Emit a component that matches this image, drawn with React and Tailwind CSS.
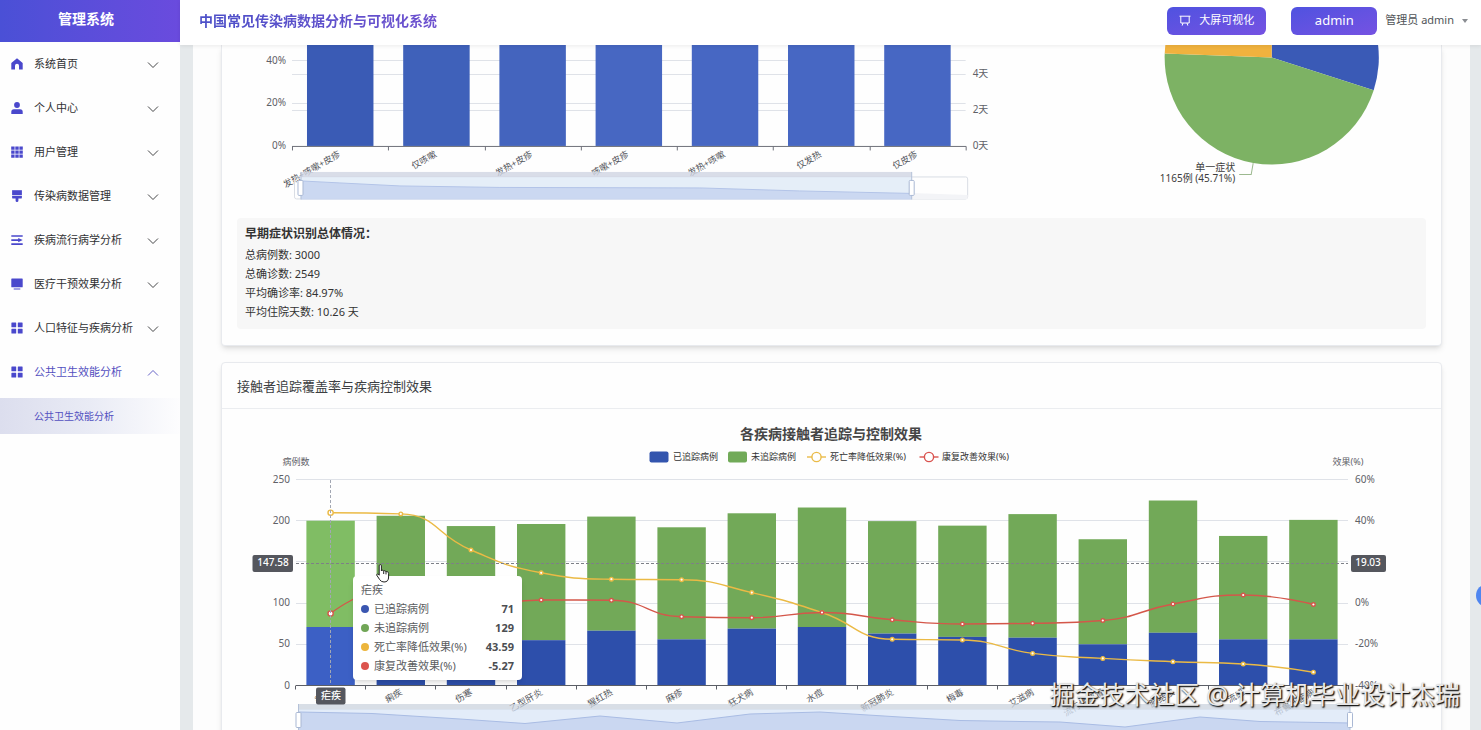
import React from "react";

const SANS = "font-['Noto_Sans','Noto_Sans_CJK_SC',sans-serif]";

const icons = {
  home: <path d="M6 0.3 L11.7 5 V11.6 H8 V7.8 A2 2 0 0 0 4 7.8 V11.6 H0.3 V5 Z" />,
  user: (
    <>
      <circle cx="6" cy="3" r="2.9" />
      <path d="M0.3 12 V9.8 A2.6 2.6 0 0 1 2.9 7.2 H9.1 A2.6 2.6 0 0 1 11.7 9.8 V12 Z" />
    </>
  ),
  grid: (
    <path d="M0.2 0.4h3.4v3.4H0.2zM4.3 0.4h3.4v3.4H4.3zM8.4 0.4h3.4v3.4H8.4zM0.2 4.4h3.4v3.4H0.2zM4.3 4.4h3.4v3.4H4.3zM8.4 4.4h3.4v3.4H8.4zM0.2 8.4h3.4v3.4H0.2zM4.3 8.4h3.4v3.4H4.3zM8.4 8.4h3.4v3.4H8.4z" />
  ),
  brush: (
    <>
      <path d="M1.1 0.2 H10.9 V5 H1.1 Z" />
      <path d="M1.1 5.7 H10.9 V7.4 Q10.9 8.6 9.7 8.6 H7.4 V10.8 A1.4 1.2 0 0 1 4.6 10.8 V8.6 H2.3 Q1.1 8.6 1.1 7.4 Z" />
    </>
  ),
  operation: (
    <path d="M0.3 1.2 H11.7 V2.8 H0.3 Z M0.3 5.3 H7.2 V3.9 L11.7 6.1 L7.2 8.3 V6.9 H0.3 Z M0.3 9.3 H11.7 V10.9 H0.3 Z" />
  ),
  monitor: (
    <path d="M0.9 0.5 H11.1 Q11.7 0.5 11.7 1.1 V8.7 Q11.7 9.3 11.1 9.3 H0.9 Q0.3 9.3 0.3 8.7 V1.1 Q0.3 0.5 0.9 0.5 Z M2.7 10.4 H9.3 V11.4 H2.7 Z" />
  ),
  menu: (
    <path d="M0.9 0.4h3.8q.5 0 .5.5v3.8q0 .5-.5.5H0.9q-.5 0-.5-.5V0.9q0-.5.5-.5zM7.3 0.4h3.8q.5 0 .5.5v3.8q0 .5-.5.5H7.3q-.5 0-.5-.5V0.9q0-.5.5-.5zM0.9 6.8h3.8q.5 0 .5.5v3.8q0 .5-.5.5H0.9q-.5 0-.5-.5V7.3q0-.5.5-.5zM7.3 6.8h3.8q.5 0 .5.5v3.8q0 .5-.5.5H7.3q-.5 0-.5-.5V7.3q0-.5.5-.5z" />
  ),
};

const menu = [
  ["home", "系统首页"],
  ["user", "个人中心"],
  ["grid", "用户管理"],
  ["brush", "传染病数据管理"],
  ["operation", "疾病流行病学分析"],
  ["monitor", "医疗干预效果分析"],
  ["menu", "人口特征与疾病分析"],
  ["menu", "公共卫生效能分析"],
];

function Sidebar() {
  return (
    <aside className="relative z-10 flex w-[180px] shrink-0 flex-col bg-[#fefefe]">
      <div className="flex h-[42px] items-center justify-center bg-linear-to-r from-[#4a50d6] to-[#6a4bde] pr-2 pb-1 text-sm font-bold text-white">
        管理系统
      </div>
      <nav className="flex flex-col">
        {menu.map(([icon, label], i) => {
          const open = i === menu.length - 1;
          return (
            <button
              key={label}
              type="button"
              aria-expanded={open}
              className={
                "flex h-11 items-center pr-[21px] pl-[11px] text-left text-[11px] " +
                (open ? "text-[#5350c0]" : "text-[#303133]")
              }
            >
              <svg viewBox="0 0 12 12" className="mr-[11px] size-3 shrink-0" fill="#4a48cc" aria-hidden="true">
                {icons[icon]}
              </svg>
              <span className="flex-1 whitespace-nowrap">{label}</span>
              <svg viewBox="0 0 12 12" className="mt-0.5 size-3 shrink-0" fill="none" stroke="currentColor" strokeWidth="0.9" aria-hidden="true">
                <path d={open ? "M1 8.5 L6 3.5 L11 8.5" : "M1 3.5 L6 8.5 L11 3.5"} />
              </svg>
            </button>
          );
        })}
        <a
          href="#health"
          className="mt-1 flex h-9 items-center bg-linear-to-r from-[#dcdeee] via-[#e9ebf5] to-[#fdfdfe] pl-[34px] text-[10px] text-[#5350c0]"
        >
          公共卫生效能分析
        </a>
      </nav>
    </aside>
  );
}

function Header() {
  return (
    <header className="relative z-10 flex h-[45px] shrink-0 items-center bg-white pb-1 pl-[19px] shadow-[0_1px_4px_rgba(0,0,0,0.08)]">
      <h1 className="bg-linear-to-r from-[#4c50c8] to-[#6d50cf] bg-clip-text text-sm font-bold text-transparent">
        中国常见传染病数据分析与可视化系统
      </h1>
      <div className="ml-auto flex items-center pr-[13px]">
        <button
          type="button"
          className="flex h-7 w-[99px] items-center justify-center gap-2 rounded-md bg-linear-to-br from-[#4f52e0] to-[#7552e2] text-[11px] text-white"
        >
          <svg viewBox="0 0 12 12" className="size-3" fill="none" stroke="#fff" strokeWidth="1" aria-hidden="true">
            <path d="M0.5 1.2 H11.5 M1.8 1.2 V8 H10.2 V1.2 M4 8 L3.2 10.6 M8 8 L8.8 10.6" />
          </svg>
          大屏可视化
        </button>
        <button
          type="button"
          className="ml-[25px] h-7 w-[86px] rounded-md bg-linear-to-br from-[#4f52e0] to-[#7552e2] text-[13px] text-white"
        >
          admin
        </button>
        <button type="button" className="ml-2 flex items-center gap-2 text-[11px] text-[#505358]">
          管理员 admin
          <svg viewBox="0 0 6 4" className="h-1 w-1.5" fill="#8a8d92" aria-hidden="true">
            <path d="M0 0 H6 L3 4 Z" />
          </svg>
        </button>
      </div>
    </header>
  );
}

const symptoms = [
  ["发热+咳嗽+皮疹", "#3a5bb5"],
  ["仅咳嗽", "#3f61ba"],
  ["发热+皮疹", "#4464be"],
  ["咳嗽+皮疹", "#4767c2"],
  ["发热+咳嗽", "#4767c3"],
  ["仅发热", "#4767c3"],
  ["仅皮疹", "#4767c3"],
];

function Handle({ x, y }) {
  return <rect x={x - 2.5} y={y} width="5" height="15" rx="1" fill="#fff" stroke="#a9b8d4" />;
}

function SymptomChart() {
  const step = 96.25;
  return (
    <svg viewBox="237 45 793 165" className="block w-full" role="img" aria-label="症状确诊率">
      <g stroke="#dfe2e8">
        {[60.5, 74.5, 103.5, 110.5].map((y) => (
          <line key={y} x1="292" x2="966" y1={y} y2={y} />
        ))}
      </g>
      {symptoms.map(([name, fill], i) => (
        <rect key={name} x={307 + i * step} y="30" width="66.5" height="116" fill={fill} />
      ))}
      <path
        d={"M292 146.5 H966.5 " + symptoms.concat([0]).map((_, i) => `M${Math.round(292 + i * step) + 0.5} 146.5 v4`).join(" ")}
        stroke="#6e7079"
        fill="none"
      />
      <g fontSize="10" fill="#5f6168">
        <text x="286" y="64" textAnchor="end">40%</text>
        <text x="286" y="106" textAnchor="end">20%</text>
        <text x="286" y="149" textAnchor="end">0%</text>
        <text x="973" y="77">4天</text>
        <text x="973" y="113">2天</text>
        <text x="973" y="149">0天</text>
      </g>
      <g fontSize="9" fill="#54565c" textAnchor="end">
        {symptoms.map(([name], i) => (
          <text key={name} transform={`translate(${341 + i * step} 156) rotate(-30)`}>{name}</text>
        ))}
      </g>
      <rect x="294.5" y="177" width="673.5" height="22" rx="2" fill="none" stroke="#d9dde4" />
      <path d="M912 193 L968 195 V199 H912 Z" fill="#f3f4f7" />
      <rect x="300.5" y="177" width="611.5" height="22.5" fill="#dce8f6" fillOpacity="0.75" />
      <path d="M301 181 L340 183 L400 186 L500 187.5 L700 188 L800 191 L912 193.5 V199.5 H301 Z" fill="#c8d5f0" fillOpacity="0.9" />
      <path d="M301 181 L340 183 L400 186 L500 187.5 L700 188 L800 191 L912 193.5" fill="none" stroke="#b3c4e8" />
      <rect x="300.5" y="172" width="611.5" height="5" fill="#d0d5e2" fillOpacity="0.8" />
      <path d="M301 172 V199.5 M912 172 V199.5" stroke="#b4c1d8" />
      <Handle x={300.5} y={180.5} />
      <Handle x={912} y={180.5} />
    </svg>
  );
}

function SymptomPie() {
  return (
    <svg viewBox="1030 45 396 165" className="block w-full" role="img" aria-label="症状构成">
      <path d="M1271.5 57.5 V-49.5 A107 107 0 0 1 1373.4 90.2 Z" fill="#3a5ab6" />
      <path d="M1271.5 57.5 L1373.4 90.2 A107 107 0 0 1 1164.6 53.5 Z" fill="#7db264" />
      <path d="M1271.5 57.5 L1164.6 53.5 A107 107 0 0 1 1271.5 -49.5 Z" fill="#f0b23e" />
      <path d="M1253 163 L1251 174.5 H1239" fill="none" stroke="#9cb98f" />
      <g fontSize="10" fill="#3c3c3c" textAnchor="end">
        <text x="1235" y="171">单一症状</text>
        <text x="1235" y="182">1165例 (45.71%)</text>
      </g>
    </svg>
  );
}

const diseases = [
  ["疟疾", 71, 200, 512.7, 613.5],
  ["痢疾", 60, 206, 513.9, 586],
  ["伤寒", 55, 193.5, 550, 607],
  ["乙型肝炎", 55, 196, 572.8, 600],
  ["猩红热", 66.5, 205, 579.2, 600.3],
  ["麻疹", 56, 192, 579.7, 616.7],
  ["狂犬病", 69, 209, 592.6, 617.7],
  ["水痘", 71, 216, 612.5, 612.5],
  ["新冠肺炎", 63, 199.5, 639.3, 619.8],
  ["梅毒", 59, 194, 640, 624],
  ["艾滋病", 58, 208, 653.4, 623.3],
  ["流行性感冒", 50, 177.5, 658.4, 620.5],
  ["肺结核", 64, 224.5, 661.7, 604],
  ["流感", 56, 181.5, 664, 595],
  ["布鲁氏菌病", 56, 201, 672.2, 604.5],
];
const STEP = 70.2;
const cx = (i) => 330.6 + i * STEP;
const vy = (v) => 685.5 - v * 0.824;

function smoothPath(pts) {
  const clamp = (v, a, b) => Math.max(Math.min(a, b), Math.min(Math.max(a, b), v));
  let d = `M${pts[0][0]} ${pts[0][1]}`;
  let cp0 = pts[0];
  for (let i = 1; i < pts.length; i++) {
    const [x, y] = pts[i];
    const prev = pts[i - 1];
    const next = pts[i + 1];
    let cp1 = pts[i];
    let nextCp0 = pts[i];
    if (next) {
      const lp = Math.hypot(x - prev[0], y - prev[1]);
      const ln = Math.hypot(next[0] - x, next[1] - y);
      const r = ln / (lp + ln);
      let nx = clamp(x + (next[0] - prev[0]) * 0.5 * r, x, next[0]);
      let ny = clamp(y + (next[1] - prev[1]) * 0.5 * r, y, next[1]);
      const px = clamp(x - ((nx - x) * lp) / ln, x, prev[0]);
      const py = clamp(y - ((ny - y) * lp) / ln, y, prev[1]);
      nx = x + ((x - px) * ln) / lp;
      ny = y + ((y - py) * ln) / lp;
      cp1 = [px, py];
      nextCp0 = [nx, ny];
    }
    d += ` C${cp0[0]} ${cp0[1]} ${cp1[0]} ${cp1[1]} ${x} ${y}`;
    cp0 = nextCp0;
  }
  return d;
}

function Line({ col, color }) {
  const pts = diseases.map((d, i) => [cx(i), d[col]]);
  return (
    <g fill="none" stroke={color} strokeWidth="1.4">
      <path d={smoothPath(pts)} />
      {pts.map(([x, y], i) => (
        <circle key={i} cx={x} cy={y} r={i === 0 ? 2.6 : 1.8} fill="#fff" />
      ))}
    </g>
  );
}

function TrackingChart() {
  const wave =
    "M299 712 L372 713.5 L460 719 L525 723.5 L600 716 L677 723 L750 714 L820 712 L900 717 L960 720.5 L1020 721.5 L1060 722 L1125 727 L1200 717 L1260 721.5 L1350 723";
  return (
    <svg viewBox="237 409 1189 331" className="block w-full" role="img" aria-label="各疾病接触者追踪与控制效果">
      <text x="831" y="439" fontSize="14" fontWeight="700" fill="#464646" textAnchor="middle">各疾病接触者追踪与控制效果</text>
      <rect x="649.5" y="451.5" width="19" height="11" rx="2" fill="#3355ae" />
      <rect x="728" y="451.5" width="19" height="11" rx="2" fill="#71aa58" />
      <g fill="#fff" strokeWidth="1.4">
        <path d="M807 457 H826" stroke="#eabb48" />
        <circle cx="816.5" cy="457" r="4.6" stroke="#eabb48" />
        <path d="M919.5 457 H938.5" stroke="#d9534f" />
        <circle cx="929" cy="457" r="4.6" stroke="#d9534f" />
      </g>
      <g fontSize="9" fill="#333">
        <text x="673" y="460">已追踪病例</text>
        <text x="751" y="460">未追踪病例</text>
        <text x="830" y="460">死亡率降低效果(%)</text>
        <text x="942" y="460">康复改善效果(%)</text>
      </g>
      <g fontSize="9" fill="#5f6168">
        <text x="296" y="465" textAnchor="middle">病例数</text>
        <text x="1348" y="465" textAnchor="middle">效果(%)</text>
      </g>
      <g stroke="#dfe2e8">
        {[50, 100, 150, 200, 250].map((v) => (
          <line key={v} x1="296" x2="1348" y1={Math.floor(vy(v)) + 0.5} y2={Math.floor(vy(v)) + 0.5} />
        ))}
      </g>
      {diseases.map(([name, a, total], i) => (
        <g key={name}>
          <rect x={cx(i) - 24.2} y={vy(total)} width="48.4" height={(total - a) * 0.824} fill={i === 0 ? "#80bd64" : "#72a958"} />
          <rect x={cx(i) - 24.2} y={vy(a)} width="48.4" height={a * 0.824} fill={i === 0 ? "#3c60c5" : "#2d4fab"} />
        </g>
      ))}
      <path
        d={"M296 685.5 H1349 " + diseases.concat([0]).map((_, i) => `M${Math.round(295 + i * STEP) + 0.5} 685.5 v4`).join(" ")}
        stroke="#5b5e66"
        fill="none"
      />
      <Line col={3} color="#ebba45" />
      <Line col={4} color="#d4574a" />
      <path d="M296 563.5 H1348" stroke="#7d8087" strokeDasharray="3 2" />
      <path d="M330.5 480 V685" stroke="#a2a7b3" strokeDasharray="3 2" />
      <g fontSize="10" fill="#5f6168">
        {[0, 50, 100, 200, 250].map((v) => (
          <text key={v} x="290" y={vy(v) + 3} textAnchor="end">{v}</text>
        ))}
        {[-40, -20, 0, 40, 60].map((v) => (
          <text key={v} x="1355" y={vy((v + 40) * 2.5) + 3}>{v}%</text>
        ))}
      </g>
      <g fontSize="9" fill="#54565c" textAnchor="end">
        {diseases.map(([name], i) => (
          <text key={name} transform={`translate(${cx(i) + 2} 694) rotate(-30)`}>{name}</text>
        ))}
      </g>
      <rect x="298.5" y="709" width="1051.5" height="31" fill="#d9e6f7" fillOpacity="0.75" />
      <path d={wave + " V740 H299 Z"} fill="#c3d2ef" fillOpacity="0.8" />
      <path d={wave} fill="none" stroke="#a9bce4" />
      <rect x="298.5" y="704" width="1051.5" height="5.5" fill="#c7d0dc" fillOpacity="0.7" />
      <path d="M298.5 704 V740 M1350 704 V740" stroke="#b4c1d8" />
      <Handle x={298.5} y={712.5} />
      <Handle x={1350} y={712.5} />
      <g fill="#55575e">
        <rect x="252.5" y="555" width="40.5" height="17" rx="2" />
        <rect x="1351" y="555" width="35" height="17" rx="2" />
        <rect x="316" y="687.5" width="29.5" height="17" rx="2" />
      </g>
      <g fontSize="10" fill="#fff" fontWeight="500" textAnchor="middle">
        <text x="273" y="566">147.58</text>
        <text x="1368" y="566">19.03</text>
        <text x="331" y="699">疟疾</text>
      </g>
    </svg>
  );
}

const tooltipRows = [
  ["bg-[#3a56b0]", "已追踪病例", "71"],
  ["bg-[#71a657]", "未追踪病例", "129"],
  ["bg-[#ecb53c]", "死亡率降低效果(%)", "43.59"],
  ["bg-[#dc544e]", "康复改善效果(%)", "-5.27"],
];

function Tooltip() {
  return (
    <div className="absolute top-[167px] left-[131px] w-[169px] rounded bg-white px-2 pt-1 pb-[5px] text-[11px] leading-[19px] text-[#5a5c60] shadow-md">
      <div>疟疾</div>
      {tooltipRows.map(([dot, label, value]) => (
        <div key={label} className="flex items-center">
          <span className={"mr-[5px] size-2 rounded-full " + dot} />
          <span>{label}</span>
          <span className="ml-auto font-bold text-[#4c4e52]">{value}</span>
        </div>
      ))}
    </div>
  );
}

export default function App() {
  return (
    <div className={"relative flex h-screen overflow-hidden bg-[#e5e9eb] " + SANS}>
      <Sidebar />
      <div className="flex min-w-0 flex-1 flex-col">
        <Header />
        <main className="mr-[11px] ml-[13px] min-h-0 flex-1 overflow-hidden bg-[#fdfdfd] px-7">
          <section className="rounded-b border border-t-0 border-[#e8eaee] bg-[#fefefe] px-[15px] pb-4 shadow-md">
            <div className="grid grid-cols-[2fr_1fr]">
              <SymptomChart />
              <SymptomPie />
            </div>
            <div className="mt-2 rounded bg-[#f7f7f7] px-2 pt-[5px] pb-2 text-[11px] leading-[19px] text-[#333]">
              <h2 className="mb-px text-xs leading-[21px] font-bold text-[#333]">早期症状识别总体情况：</h2>
              <p>总病例数: 3000</p>
              <p>总确诊数: 2549</p>
              <p>平均确诊率: 84.97%</p>
              <p>平均住院天数: 10.26 天</p>
            </div>
          </section>
          <section className="mt-4 rounded border border-[#e8eaee] bg-[#fefefe] shadow-md">
            <h2 className="flex h-[46px] items-center border-b border-[#ebedf0] px-[15px] pt-0.5 text-[13px] text-[#3c3e42]">
              接触者追踪覆盖率与疾病控制效果
            </h2>
            <div className="relative px-[15px]">
              <TrackingChart />
              <Tooltip />
              <svg viewBox="0 0 14 19" className="absolute top-[155px] left-[154px] h-[19px] w-3.5" fill="#fff" stroke="#222" strokeWidth="1" aria-hidden="true">
                <path
                  strokeLinejoin="round"
                  d="M3.2 11.2 V1.8 Q3.2 0.6 4.3 0.6 Q5.4 0.6 5.4 1.8 V7 Q5.6 6.2 6.5 6.2 Q7.5 6.2 7.7 7.3 Q8 6.6 8.8 6.7 Q9.8 6.8 10 7.9 Q10.4 7.4 11.2 7.6 Q12.6 8 12.6 9.6 V13 Q12.6 18 8 18 Q5 18 3.7 15.6 L1 11.6 Q0.4 10.5 1.3 10 Q2.2 9.6 3.2 11.2 Z"
                />
                <path d="M7.7 7.3 V10 M10 7.9 V10.4" />
              </svg>
            </div>
          </section>
        </main>
      </div>
      <button type="button" aria-label="打开工具栏" className="absolute top-[584px] -right-[18px] z-20 size-[23px] rounded-full bg-[#4f86f0]" />
      <div className="pointer-events-none absolute right-[21px] bottom-[17px] z-20 text-[25px] leading-[38px] whitespace-nowrap text-[#e9e9e9] [text-shadow:1px_1px_1px_#111,1px_1px_2px_#444]">
        掘金技术社区 @ 计算机毕业设计杰瑞
      </div>
    </div>
  );
}
